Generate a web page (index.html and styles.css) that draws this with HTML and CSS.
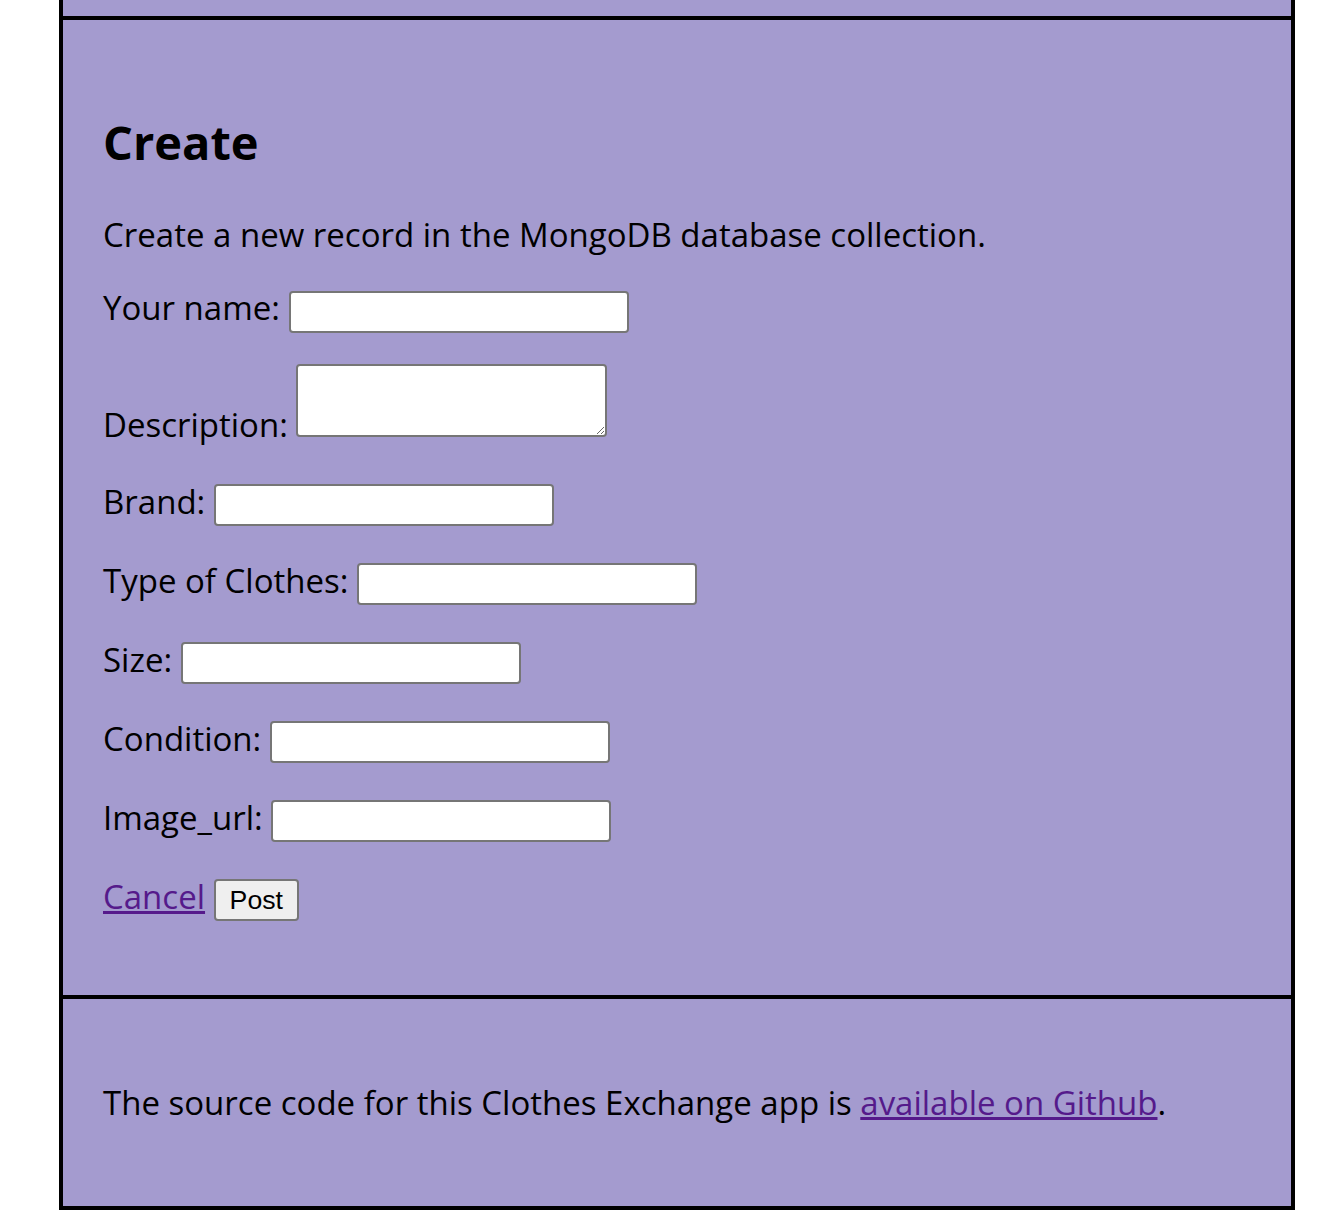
FILE: index.html
```html
<!DOCTYPE html>
<html lang="en">
<head>
<meta charset="utf-8">
<title>Create</title>
<link rel="stylesheet" href="styles.css">
</head>
<body>
<div class="page">
  <div class="top-sliver"></div>
  <main class="main">
    <h2 class="title">Create</h2>
    <p class="lead">Create a new record in the MongoDB database collection.</p>
    <form class="form">
      <p class="field">Your name: <input class="text-input" type="text"></p>
      <p class="field">Description: <textarea class="text-area"></textarea></p>
      <p class="field">Brand: <input class="text-input" type="text"></p>
      <p class="field">Type of Clothes: <input class="text-input" type="text"></p>
      <p class="field">Size: <input class="text-input" type="text"></p>
      <p class="field">Condition: <input class="text-input" type="text"></p>
      <p class="field">Image_url: <input class="text-input" type="text"></p>
      <p class="field actions"><a class="link" href="#">Cancel</a> <button class="btn" type="button">Post</button></p>
    </form>
  </main>
  <footer class="footer">
    <p class="footer-text">The source code for this Clothes Exchange app is <a class="link" href="#">available on Github</a>.</p>
  </footer>
</div>
</body>
</html>
```

FILE: styles.css
```css
html, body {
  margin: 0;
  padding: 0;
  background: #ffffff;
}

body {
  font-family: "Open Sans", "Noto Sans", "Liberation Sans", sans-serif;
  font-size: 33px;
  line-height: 45px;
  color: #000000;
}

.page {
  margin-left: 59px;
  width: 1236px;
  box-sizing: border-box;
  border: 4px solid #000000;
  border-top: 0;
  background: #a49bcf;
}

.top-sliver {
  height: 16px;
  border-bottom: 4px solid #000000;
}

.main {
  padding: 50px 40px 74px;
  border-bottom: 4px solid #000000;
}

.title {
  font-size: 47px;
  line-height: 64px;
  font-weight: 700;
  margin: 40px 0 38px;
}

.lead {
  margin: 0 0 28px;
}

.form {
  margin: 0;
}

.field {
  margin: 31.5px 0;
}

.form .field:first-child {
  margin-top: 28px;
}

.field.actions {
  margin-top: 27px;
  margin-bottom: 0;
}

.text-input {
  box-sizing: border-box;
  width: 340px;
  height: 42px;
  padding: 2px 4px;
  border: 2px solid #767676;
  border-radius: 4px;
  background: #ffffff;
  font-family: "Liberation Sans", Arial, sans-serif;
  font-size: 26.67px;
  margin: 0;
}

.text-area {
  box-sizing: border-box;
  width: 311px;
  height: 73px;
  padding: 4px;
  border: 2px solid #767676;
  border-radius: 4px;
  background: #ffffff;
  font-family: "Liberation Mono", monospace;
  font-size: 26.67px;
  margin: 0;
  vertical-align: baseline;
}

.btn {
  box-sizing: border-box;
  height: 42px;
  padding: 2px 14px;
  border: 2px solid #767676;
  border-radius: 4px;
  background: #efefef;
  color: #000000;
  font-family: "Liberation Sans", Arial, sans-serif;
  font-size: 26.67px;
  margin: 0;
}

.link {
  color: #551a8b;
  text-decoration: underline;
}

.footer {
  padding: 49px 40px;
}

.footer-text {
  margin: 32px 0;
}
```
